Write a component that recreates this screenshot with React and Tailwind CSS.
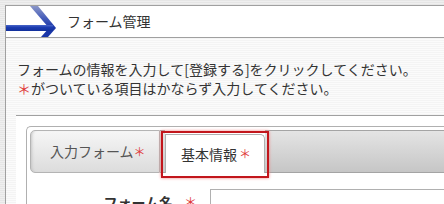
export default function App() {
  const font = { fontFamily: '"Noto Sans CJK JP", "Noto Sans", sans-serif' };
  return (
    <div
      className="w-[444px] h-[204px] overflow-hidden pl-[5px] pt-[5px] bg-[repeating-linear-gradient(to_bottom,#e6e6e6_0px,#e6e6e6_1px,#efefef_1px,#efefef_2px)]"
      style={font}
    >
      <div className="h-full border-l border-t border-[#a0a0a0] bg-[repeating-linear-gradient(to_bottom,#f4f4f4_0px,#f4f4f4_1px,#fbfbfb_1px,#fbfbfb_2px)]">
        {/* Header */}
        <div className="h-[32px] bg-white border-b border-[#a0a0a0] flex items-center">
          <svg width="54" height="31" viewBox="0 0 54 31" className="shrink-0">
            <defs>
              <linearGradient id="leg" x1="0" y1="0" x2="0" y2="1">
                <stop offset="0" stopColor="#8a96c8" />
                <stop offset="0.6" stopColor="#4058b8" />
                <stop offset="1" stopColor="#1a36a8" />
              </linearGradient>
              <linearGradient id="bar" x1="0" y1="0" x2="0" y2="1">
                <stop offset="0" stopColor="#4a66c8" />
                <stop offset="0.4" stopColor="#1c3cb0" />
                <stop offset="1" stopColor="#12309c" />
              </linearGradient>
            </defs>
            <polygon points="24,0 32,0 50,22 43,22" fill="url(#leg)" />
            <polygon points="43,22 50,22 42,31 35,31" fill="#1a36a8" />
            <rect x="0" y="19" width="47" height="6" fill="url(#bar)" />
          </svg>
          <span className="ml-[7px] text-[14px] text-[#333]">フォーム管理</span>
        </div>

        {/* Description */}
        <div className="pt-[22px] pl-[11px] text-[14px] leading-[19px] text-[#333]">
          <p>フォームの情報を入力して[登録する]をクリックしてください。</p>
          <p>
            <span className="text-[#e03a3a]">＊</span>がついている項目はかならず入力してください。
          </p>
        </div>

        {/* Panel */}
        <div className="mt-[17px] ml-[10px] bg-white border-t border-[#a0a0a0] pt-[10px] pl-[10px] h-[100px]">
          <div className="relative h-full bg-white border-l border-t border-[#b0b0b0] rounded-tl-[5px] pl-[3px] pt-[3px]">
            <div className="flex h-[43px]">
              <div className="w-[130px] h-full shrink-0 border border-[#b4b4b4] rounded-l-[5px] bg-[linear-gradient(to_bottom,#f6f6f6,#e9e9e9_50%,#dcdcdc)] shadow-[inset_3px_0_3px_-2px_#c4c4c4] flex items-center pl-[19px] text-[14px] text-[#555]">
                入力フォーム<span className="text-[#e03a3a] text-[12px]">＊</span>
              </div>
              <div className="w-[5px] h-full border-y border-[#a4a4a4] bg-[linear-gradient(to_bottom,#e4e4e4,#c8c8c8)]" />
              <div className="w-[100px] h-[39px] self-end shrink-0 bg-white border-l border-t border-r border-[#b0b0b0] rounded-tr-[5px] flex items-center pl-[15px] text-[14px] text-[#333]">
                基本情報<span className="text-[#e03a3a] text-[12px] ml-[2px]">＊</span>
              </div>
              <div className="flex-1 h-full border-y border-[#a4a4a4] bg-[linear-gradient(to_bottom,#e4e4e4,#c6c6c6)]" />
            </div>

            <div className="flex pt-[16px]">
              <div className="w-[143px] shrink-0 text-right text-[14px] leading-[26px] font-bold text-[#333]">
                フォーム名
              </div>
              <span className="ml-[11px] w-[14px] text-[#e03a3a] text-[13px] leading-[26px]">＊</span>
              <div className="ml-[12px] flex-1 h-[26px] border-l border-t border-[#b0b0b0] bg-white" />
            </div>

            {/* highlight box */}
            <div className="absolute left-[134px] top-[4px] w-[108px] h-[47px] border-2 border-[#c2161c] shadow-[0_0_3px_#f08080]" />
          </div>
        </div>
      </div>
    </div>
  );
}
